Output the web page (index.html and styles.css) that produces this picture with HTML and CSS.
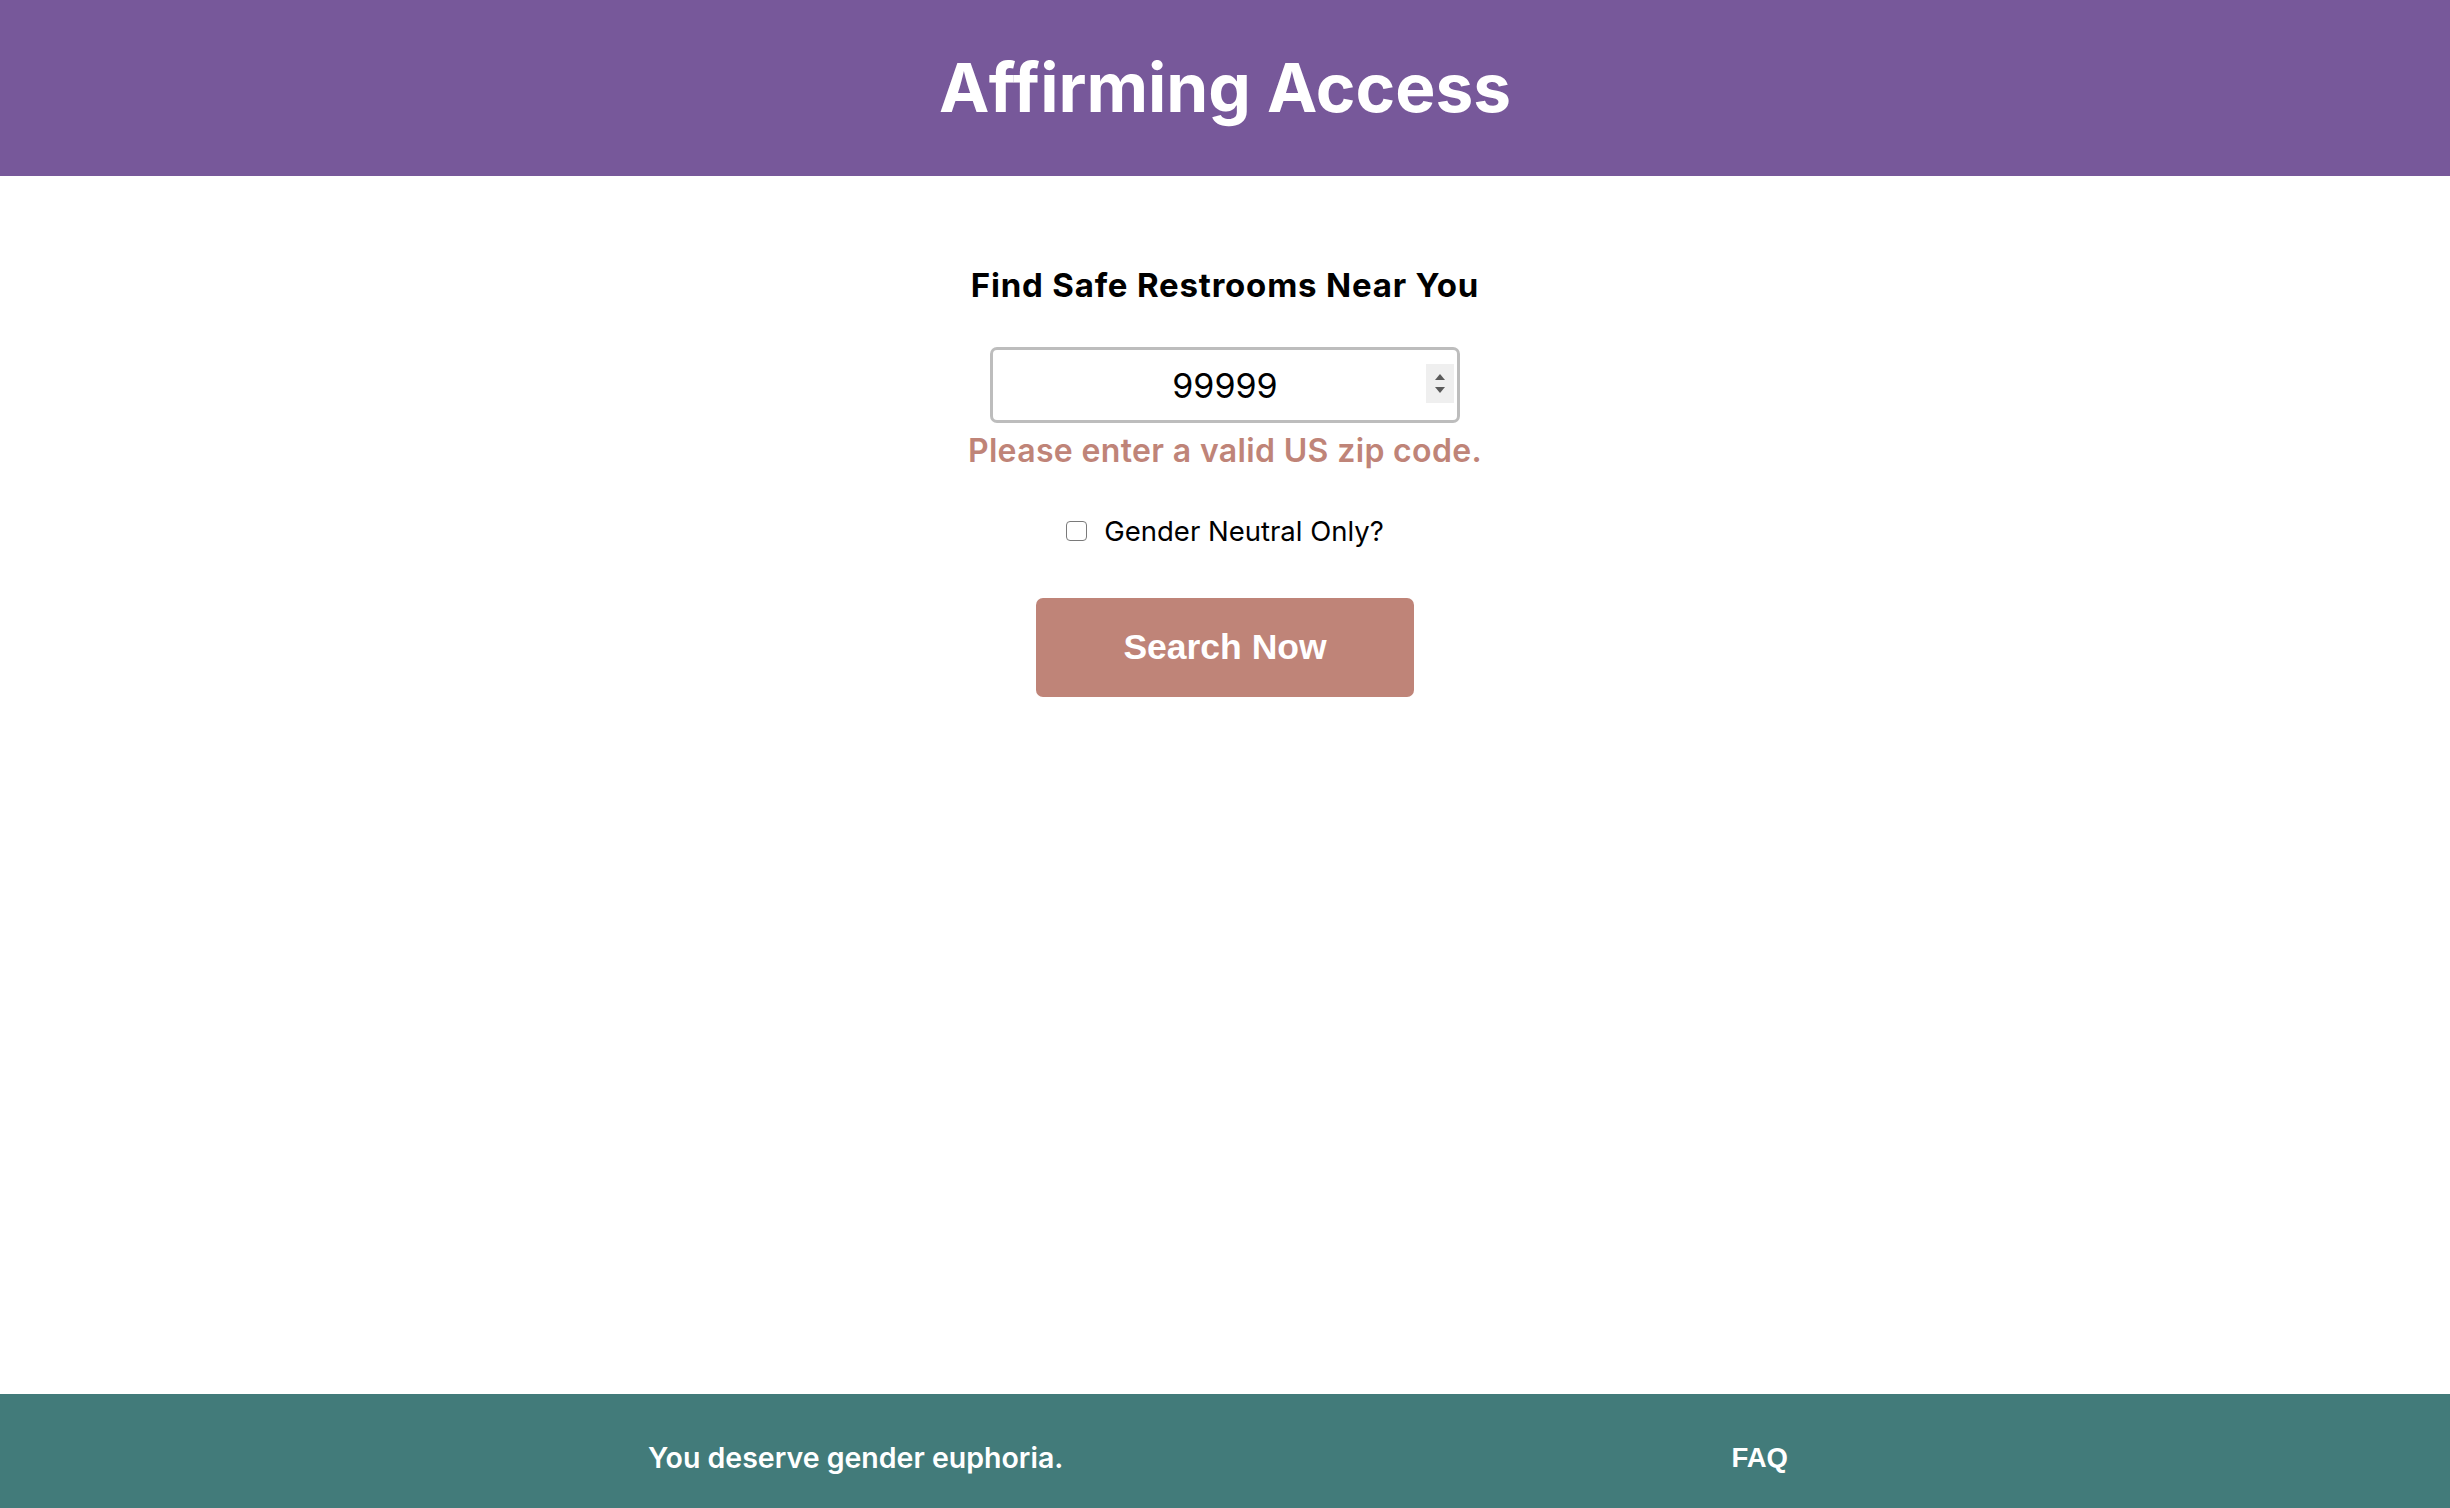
FILE: index.html
```html
<!DOCTYPE html>
<html lang="en">
<head>
<meta charset="utf-8">
<title>Affirming Access</title>
<link rel="stylesheet" href="styles.css">
</head>
<body>
<header class="site-header">
  <h1 class="site-title">Affirming Access</h1>
</header>
<main class="search">
  <h2 class="search-heading">Find Safe Restrooms Near You</h2>
  <div class="zip-field">
    <input class="zip-input" type="text" inputmode="numeric" value="99999" aria-label="Zip code">
    <div class="spinner" aria-hidden="true">
      <svg class="spin-arrow" width="10" height="6" viewBox="0 0 10 6"><path d="M5 0 L10 6 L0 6 Z"/></svg>
      <svg class="spin-arrow" width="10" height="6" viewBox="0 0 10 6"><path d="M0 0 L10 0 L5 6 Z"/></svg>
    </div>
  </div>
  <p class="zip-error">Please enter a valid US zip code.</p>
  <label class="option">
    <input class="option-box" type="checkbox">
    <span>Gender Neutral Only?</span>
  </label>
  <button class="search-btn" type="button">Search Now</button>
</main>
<footer class="site-footer">
  <p class="tagline">You deserve gender euphoria.</p>
  <a class="faq-link" href="#">FAQ</a>
</footer>
</body>
</html>
```

FILE: styles.css
```css
* {
  box-sizing: border-box;
}

html, body {
  margin: 0;
  padding: 0;
}

body {
  min-height: 100vh;
  display: flex;
  flex-direction: column;
  font-family: Inter, "Noto Sans", "Liberation Sans", sans-serif;
  background: #ffffff;
  color: #000000;
}

.site-header {
  height: 176px;
  background: #77589a;
  display: flex;
  align-items: center;
  justify-content: center;
}

.site-title {
  margin: 0;
  color: #ffffff;
  font-size: 67.5px;
  font-weight: 700;
  line-height: 1.21;
}

.search {
  flex: 1;
  display: flex;
  flex-direction: column;
  align-items: center;
  padding-top: 89px;
}

.search-heading {
  margin: 0;
  font-size: 33px;
  font-weight: 700;
  line-height: 40px;
  letter-spacing: 0.8px;
}

.zip-field {
  position: relative;
  margin-top: 42px;
  width: 470px;
  height: 76px;
  border: 3px solid #bdbdbd;
  border-radius: 7px;
  background: #ffffff;
}

.zip-input {
  display: block;
  width: 100%;
  height: 100%;
  border: 0;
  outline: none;
  background: transparent;
  padding: 0;
  font-family: Inter, "Noto Sans", sans-serif;
  font-size: 34px;
  color: #000000;
  text-align: center;
}

.spinner {
  position: absolute;
  right: 3px;
  top: 14px;
  width: 28px;
  height: 39px;
  background: #efefef;
  display: flex;
  flex-direction: column;
  align-items: center;
  justify-content: center;
  gap: 7px;
}

.spin-arrow {
  display: block;
  fill: #5a5a5a;
}

.zip-error {
  margin: 8px 0 0;
  font-size: 32px;
  font-weight: 600;
  line-height: 40px;
  letter-spacing: 0.35px;
  color: #bf8478;
}

.option {
  margin-top: 43px;
  display: flex;
  align-items: center;
  gap: 17px;
  font-size: 27.5px;
  line-height: 34px;
  font-weight: 400;
}

.option-box {
  appearance: none;
  -webkit-appearance: none;
  margin: 0;
  width: 21px;
  height: 20px;
  border: 1.5px solid #7a7a7a;
  border-radius: 4px;
  background: #ffffff;
}

.search-btn {
  margin-top: 50px;
  width: 378px;
  height: 99px;
  border: 0;
  border-radius: 7px;
  background: #bf8478;
  color: #ffffff;
  font-family: "Liberation Sans", Arial, sans-serif;
  font-size: 35.5px;
  font-weight: 700;
  padding: 0;
}

.site-footer {
  height: 114px;
  background: #427b7a;
  display: flex;
  align-items: center;
  justify-content: space-evenly;
  padding-top: 13px;
  padding-right: 14px;
}

.tagline {
  margin: 0 20px 0 0;
  color: #ffffff;
  font-size: 28.5px;
  font-weight: 600;
}

.faq-link {
  color: #ffffff;
  text-decoration: none;
  font-family: "Liberation Sans", Arial, sans-serif;
  font-size: 27.5px;
  font-weight: 700;
}
```
